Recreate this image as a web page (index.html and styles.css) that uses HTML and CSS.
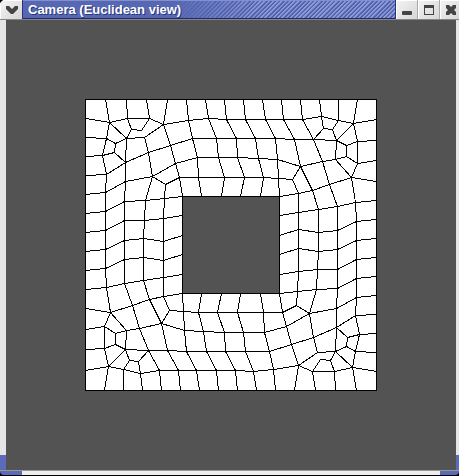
FILE: index.html
```html
<!DOCTYPE html>
<html lang="en">
<head>
<meta charset="utf-8">
<title>Camera (Euclidean view)</title>
<link rel="stylesheet" href="styles.css">
</head>
<body>
<main class="window">
  <header class="titlebar">
    <button class="control control-menu" type="button" aria-label="Window menu">
      <svg width="22" height="19" viewBox="0 0 22 19"><path class="solid" d="M6 6h3l3 3l3-3h3v3l-5 5h-2l-5-5z"/></svg>
    </button>
    <h1 class="title">Camera (Euclidean view)</h1>
    <button class="control" type="button" aria-label="Minimize">
      <svg width="22" height="19" viewBox="0 0 22 19"><rect class="solid" x="6" y="11" width="10" height="4" rx="1"/></svg>
    </button>
    <button class="control" type="button" aria-label="Maximize">
      <svg width="22" height="19" viewBox="0 0 22 19"><path class="solid" fill-rule="evenodd" d="M6 5h10v10H6zM7 8v6h8V8z"/></svg>
    </button>
    <button class="control control-close" type="button" aria-label="Close">
      <svg width="19" height="19" viewBox="0 0 19 19"><path class="solid" d="M6 5h3l2 2l2-2h3v3l-2 2l2 2v3h-3l-2-2l-2 2H6v-3l2-2l-2-2z"/></svg>
    </button>
  </header>
  <section class="view">
    <svg class="mesh" viewBox="6 20 450 450" role="img" aria-label="Quadrilateral mesh with a square hole">
      <defs>
        <g id="half">
          <!-- upper left corner -->
          <path d="M105.500 99.500L109.500 122.500M126.500 99.500L127.500 118.500M146.500 99.500L149.500 118.500M167.500 99.500L163.500 124.500"/>
          <path d="M85.500 118.500L109.500 122.500L127.500 118.500H149.500L163.500 124.500M109.500 122.500L126.500 138.500M127.500 118.500L131.500 129.500L141.500 130.500L149.500 118.500M131.500 129.500L126.500 138.500L144.500 137.500L163.500 124.500"/>
          <path d="M109.500 122.500L106.500 138.500M85.500 137.500L106.500 138.500L115.500 143.500L126.500 138.500M115.500 143.500L114.500 152.500L102.500 155.500M106.500 138.500L102.500 155.500L85.500 156.500M114.500 152.500L125.500 162.500L126.500 138.500"/>
          <path d="M102.500 155.500L106.500 174.500L105.500 192.500M85.500 175.500L106.500 174.500L125.500 162.500L148.500 152.500L170.500 145.500M144.500 137.500L148.500 152.500L152.500 176.500M163.500 124.500L170.500 145.500L175.500 163.500L179.500 177.500L182.500 196.500"/>
          <path d="M125.500 162.500V181.500M85.500 194.500L105.500 192.500L125.500 181.500L152.500 176.500L175.500 163.500M152.500 176.500L165.500 184.500L179.500 177.500"/>
          <!-- rows above the hole -->
          <path d="M163.500 124.500L188.500 120.500L208.500 118.500L226.500 119.500H302.500L321.500 116.500L338.500 120.500L353.500 123.500L376.500 119.500"/>
          <path d="M170.500 145.500L192.500 138.500H275.500L294.500 139.500H313.500L336.500 140.500"/>
          <path d="M175.500 163.500L197.500 157.500H237.500L258.500 158.500L277.500 159.500L300.500 166.500L322.500 161.500L335.500 159.500"/>
          <path d="M179.500 177.500H263.500L278.500 178.500L292.500 179.500"/>
          <!-- columns above the hole -->
          <path d="M186.500 99.500L188.500 120.500L192.500 138.500L197.500 157.500L198.500 177.500L201.500 196.500"/>
          <path d="M205.500 99.500L208.500 118.500L216.500 138.500L218.500 157.500L224.500 177.500L221.500 196.500"/>
          <path d="M224.500 99.500L226.500 119.500L236.500 138.500L237.500 157.500L244.500 177.500L240.500 196.500"/>
          <path d="M243.500 99.500L245.500 119.500L255.500 138.500L258.500 158.500L263.500 177.500L260.500 196.500"/>
          <path d="M262.500 99.500L265.500 119.500L275.500 138.500L277.500 159.500L278.500 178.500L279.500 196.500"/>
          <path d="M281.500 99.500L283.500 119.500L294.500 139.500L300.500 166.500L312.500 190.500"/>
          <path d="M300.500 99.500L302.500 119.500L313.500 139.500L322.500 161.500L329.500 184.500"/>
          <!-- upper right corner -->
          <path d="M319.500 99.500L321.500 116.500L323.500 128.500L332.500 129.500L338.500 120.500V99.500M323.500 128.500L313.500 139.500M332.500 129.500L336.500 140.500L353.500 123.500L357.500 99.500"/>
          <path d="M353.500 123.500L357.500 141.500L376.500 140.500M336.500 140.500L346.500 145.500V156.500L335.500 159.500L336.500 140.500M346.500 145.500L357.500 141.500V163.500L376.500 160.500M346.500 156.500L357.500 163.500L351.500 177.500L335.500 159.500"/>
          <path d="M376.500 181.500L351.500 177.500L329.500 184.500L312.500 190.500L298.500 193.500L279.500 196.500M300.500 166.500L292.500 179.500L298.500 193.500"/>
          <!-- strip right of the hole -->
          <path d="M279.500 215.500L298.500 212.500L318.500 209.500L337.500 206.500L355.500 202.500L376.500 200.500"/>
          <path d="M279.500 235.500L298.500 229.500L318.500 232.500L337.500 230.500L356.500 221.500L376.500 219.500"/>
          <path d="M279.500 254.500L298.500 248.500L318.500 251.500L337.500 249.500L356.500 240.500L376.500 238.500"/>
          <path d="M279.500 274.500L298.500 271.500L317.500 269.500H337.500L356.500 259.500L376.500 257.500"/>
          <path d="M279.500 293.500L297.500 291.500L316.500 289.500L337.500 288.500L356.500 278.500L376.500 276.500"/>
          <path d="M298.500 193.500V271.500L297.500 291.500L296.500 305.500"/>
          <path d="M312.500 190.500L318.500 209.500V251.500L317.500 269.500L316.500 289.500L309.500 313.500"/>
          <path d="M329.500 184.500L337.500 206.500V288.500L336.500 308.500"/>
          <path d="M351.500 177.500L355.500 202.500L356.500 221.500V297.500"/>
        </g>
      </defs>
      <rect class="plate" x="85.500" y="99.500" width="291" height="291"/>
      <g class="edges">
        <use href="#half"/>
        <use href="#half" transform="rotate(180 231 245)"/>
      </g>
      <rect class="hole" x="182.500" y="196.500" width="97" height="97"/>
    </svg>
  </section>
  <footer class="resize"></footer>
</main>
</body>
</html>
```
FILE: styles.css
```css
* {
  box-sizing: border-box;
}

body {
  margin: 0;
  background: #000;
}

.window {
  display: flex;
  flex-direction: column;
  min-height: 100vh;
  padding-bottom: 1px;
}

.titlebar {
  display: flex;
  height: 20px;
  border-bottom: 1px solid #858585;
  border-radius: 5px 0 0 0;
  overflow: hidden;
}

.title {
  flex: 1;
  margin: 0;
  padding-left: 5px;
  border-left: 1px solid #27357c;
  border-right: 1px solid #27357c;
  border-bottom: 1px solid #1c2b72;
  background:
    linear-gradient(90deg, #5767b2 0, #5767b2 150px, transparent 240px),
    repeating-linear-gradient(135deg, #8d9ad6 0, #8d9ad6 1px, #5062ae 2px, #5062ae 3px);
  box-shadow: inset 0 1px #8390d0;
  color: #fff;
  font: bold 13px/19px "Liberation Sans", sans-serif;
  text-shadow: 1px 1px #27357c;
  white-space: nowrap;
}

.control {
  flex: none;
  width: 22px;
  padding: 0;
  border: 0;
  border-right: 1px solid #aaa;
  background: linear-gradient(135deg, #f4f4f4, #d6d6d6);
  box-shadow: inset 1px 1px #fff;
}

.control-menu,
.control-close {
  border-right: 0;
}

.control-close {
  width: 19px;
}

.control svg {
  display: block;
}

.solid {
  fill: #444;
}

.view {
  flex: 1;
  border-left: 6px solid #e7e5e3;
  border-right: 3px solid #e7e5e3;
  border-image: linear-gradient(#e7e5e3 calc(100% - 16px), #5b6bb9 calc(100% - 16px)) 1;
  border-image-width: 0 3px 0 6px;
  background: #535353;
}

.mesh {
  display: block;
  width: 100%;
  shape-rendering: crispEdges;
}

.plate {
  fill: #fff;
  stroke: #000;
}

.edges {
  fill: none;
  stroke: #000;
}

.hole {
  fill: #535353;
  stroke: #000;
}

.resize {
  height: 5px;
  border-top: 1px solid #999;
  border-radius: 0 0 4px 4px;
  background: linear-gradient(90deg, #5b6bb9 22px, #efedeb 22px, #efedeb calc(100% - 19px), #5b6bb9 calc(100% - 19px));
}
```
